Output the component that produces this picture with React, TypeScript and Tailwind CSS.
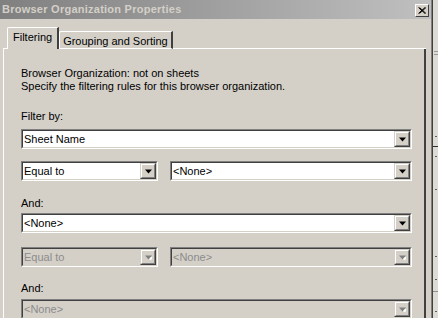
import React from "react";

const font = { fontFamily: '"Liberation Sans", Arial, sans-serif' };

function Arrow({ disabled }: { disabled?: boolean }) {
  return (
    <svg width="7" height="5" viewBox="0 0 7 5" className="block">
      {disabled && <path d="M2 2 H9 L5.5 5.5 Z" fill="#ffffff" />}
      <path d="M0 0.5 H7 L3.5 4.5 Z" fill={disabled ? "#808080" : "#000000"} />
    </svg>
  );
}

function DropButton({ disabled }: { disabled?: boolean }) {
  return (
    <div className="w-[16px] h-[16px] border border-t-[#d4d0c8] border-l-[#d4d0c8] border-b-[#404040] border-r-[#404040]">
      <div className="w-full h-full border border-t-white border-l-white border-b-[#808080] border-r-[#808080] bg-[#d4d0c8] flex items-center justify-center">
        <Arrow disabled={disabled} />
      </div>
    </div>
  );
}

function Combo({ text, disabled, className }: { text: string; disabled?: boolean; className?: string }) {
  return (
    <div className={"h-[20px] border border-t-[#808080] border-l-[#808080] border-b-white border-r-white " + (className ?? "")}>
      <div
        className={
          "h-full border border-t-[#404040] border-l-[#404040] border-b-[#d4d0c8] border-r-[#d4d0c8] flex items-center " +
          (disabled ? "bg-[#d4d0c8]" : "bg-white")
        }
      >
        <div className={"flex-1 pl-[1px] text-[11px] leading-[13px] " + (disabled ? "text-[#8c8c8c]" : "text-black")}>
          {text}
        </div>
        <DropButton disabled={disabled} />
      </div>
    </div>
  );
}

export default function App() {
  return (
    <div className="w-[438px] h-[318px] overflow-hidden flex bg-[#d4d0c8]" style={font}>
      <div className="w-[433px] h-full flex flex-col border-r border-r-[#404040]">
        <div className="h-full flex flex-col border-r border-r-[#808080]">
          {/* title bar */}
          <div className="h-[19px] shrink-0 flex items-center justify-between bg-gradient-to-r from-[#808080] to-[#c0c0c0] pl-[2px] pr-[2px]">
            <span className="text-[11px] font-bold text-[#d4d0c8] leading-[13px] tracking-[0.25px]">
              Browser Organization Properties
            </span>
            <div className="w-[14px] h-[13px] mt-[2px] border border-t-white border-l-white border-b-[#404040] border-r-[#404040] bg-[#d4d0c8] flex items-center justify-center">
              <svg width="8" height="7" viewBox="0 0 8 7">
                <path d="M0.5 0.5 L7 6.5 M1.5 0.5 L8 6.5 M7 0.5 L0.5 6.5 M8 0.5 L1.5 6.5" stroke="#000" strokeWidth="1" />
              </svg>
            </div>
          </div>

          {/* body */}
          <div className="flex-1 flex flex-col pl-[3px] pr-[5px] pt-[8px]">
            {/* tab strip */}
            <div className="flex items-end h-[22px] shrink-0">
              <div className="w-[4px] h-[1px] bg-white" />
              <div className="h-[22px] border-t border-l border-t-white border-l-white border-r-2 border-r-[#404040] rounded-tl-[2px] px-[5px] pt-[3px] text-[11px] leading-[13px] text-black">
                Filtering
              </div>
              <div className="h-[18px] border-t border-l border-t-white border-l-white border-r-2 border-r-[#404040] border-b border-b-white rounded-tl-[2px] pl-[3px] pr-[3px] pt-[3px] text-[11px] leading-[13px] text-black">
                Grouping and Sorting
              </div>
              <div className="flex-1 h-[1px] bg-white" />
            </div>

            {/* panel */}
            <div className="flex-1 border-l border-l-white border-r-2 border-r-[#404040] pl-[17px] pr-[12px] pt-[18px] text-[11px] leading-[13px] text-black">
              <div>Browser Organization: not on sheets</div>
              <div>Specify the filtering rules for this browser organization.</div>

              <div className="mt-[17px]">Filter by:</div>
              <Combo className="mt-[6px]" text="Sheet Name" />

              <div className="flex gap-[12px] mt-[12px]">
                <Combo className="w-[137px]" text="Equal to" />
                <Combo className="flex-1" text="<None>" />
              </div>

              <div className="mt-[16px]">And:</div>
              <Combo className="mt-[3px]" text="<None>" />

              <div className="flex gap-[12px] mt-[14px]">
                <Combo className="w-[137px]" text="Equal to" disabled />
                <Combo className="flex-1" text="<None>" disabled />
              </div>

              <div className="mt-[15px]">And:</div>
              <Combo className="mt-[4px]" text="<None>" disabled />
            </div>
          </div>
        </div>
      </div>

      {/* sliver of window behind */}
      <div className="w-[5px] h-full bg-[#dedbd4] flex flex-col">
        <div className="mt-[51px] ml-[1px] w-[4px] h-[1px] bg-[#9a9a9a]" />
        <div className="mt-[2px] ml-[1px] w-[4px] h-[1px] bg-[#9a9a9a]" />
        <div className="mt-[81px] ml-[2px] w-[2px] h-[1px] bg-[#606060]" />
        <div className="mt-[9px] w-[5px] h-[1px] bg-[#303030]" />
        <div className="mt-[9px] ml-[2px] w-[2px] h-[1px] bg-[#606060]" />
        <div className="mt-[32px] ml-[2px] w-[2px] h-[1px] bg-[#606060]" />
        <div className="mt-[66px] ml-[2px] w-[2px] h-[1px] bg-[#606060]" />
        <div className="mt-[22px] ml-[2px] w-[2px] h-[1px] bg-[#606060]" />
        <div className="mt-[11px] w-[5px] h-[1px] bg-[#909090]" />
        <div className="mt-[19px] ml-[2px] w-[2px] h-[1px] bg-[#606060]" />
      </div>
    </div>
  );
}
